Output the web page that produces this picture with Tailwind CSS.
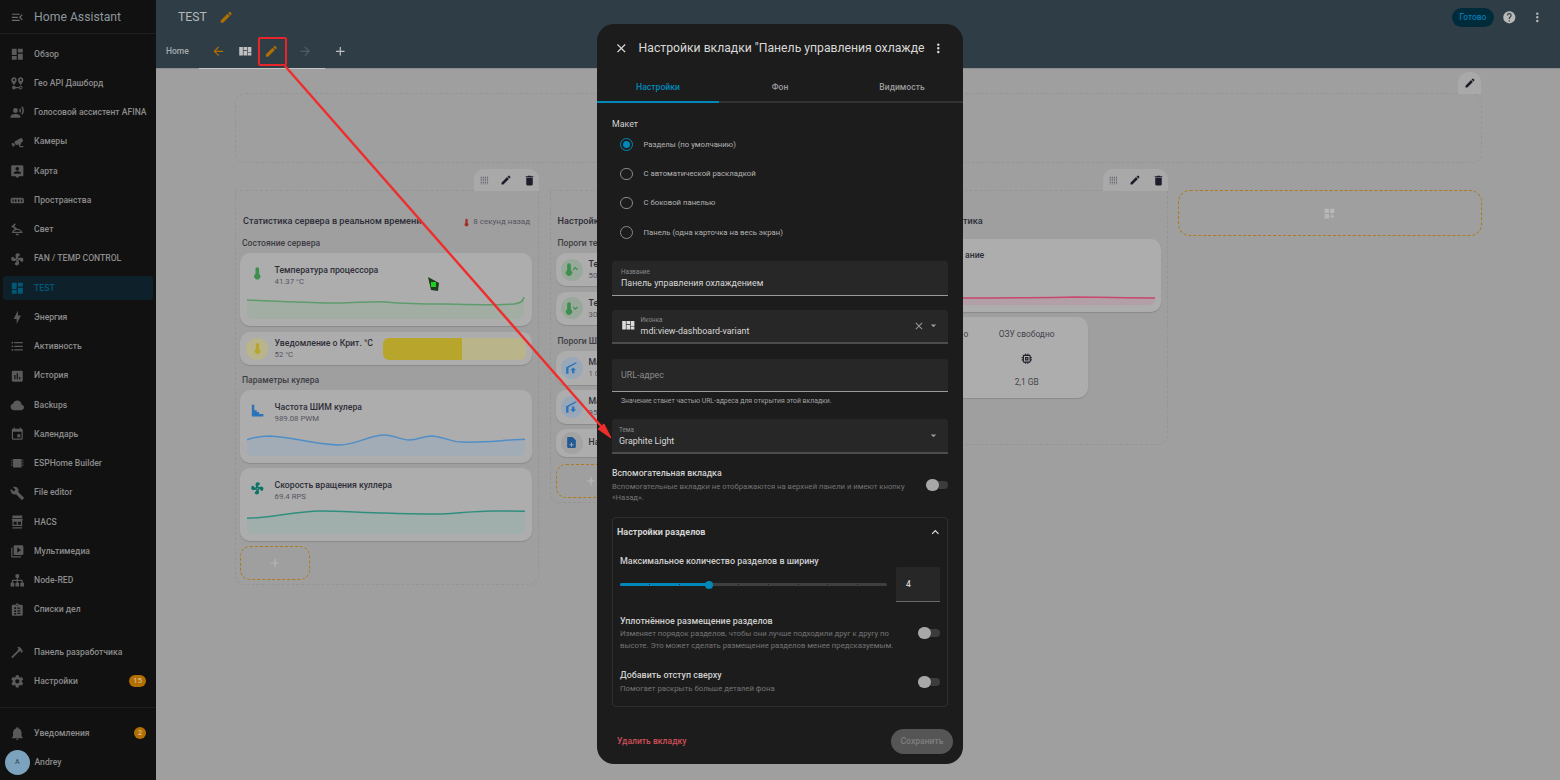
<!DOCTYPE html>
<html lang="en">
<head>
    <meta charset="UTF-8">
    <meta name="viewport" content="width=device-width, initial-scale=1.0">
    <title>Home Assistant</title>
    <script src="https://cdn.jsdelivr.net/npm/@tailwindcss/browser@4"></script>
</head>
<body class="relative h-[780px] w-[1560px] overflow-hidden bg-[#9f9f9f] font-['Roboto',sans-serif]">
    <svg class="hidden">
        <symbol id="pencil" viewBox="0 0 24 24"><path d="M20.71,7.04C21.1,6.65 21.1,6 20.71,5.63L18.37,3.29C18,2.9 17.35,2.9 16.96,3.29L15.12,5.12L18.87,8.87M3,17.25V21H6.75L17.81,9.93L14.06,6.18L3,17.25Z"/></symbol>
        <symbol id="quilt" viewBox="0 0 24 24"><path d="M2,5V19H8V5H2M9,5V10H15V5H9M16,5V14H22V5H16M9,11V19H15V11H9M16,15V19H22V15H16Z"/></symbol>
        <symbol id="dash" viewBox="0 0 24 24"><path d="M13,3V9H21V3M13,21H21V11H13M3,21H11V15H3M3,13H11V3H3V13Z"/></symbol>
        <symbol id="dots" viewBox="0 0 24 24"><path d="M12,16A2,2 0 0,1 14,18A2,2 0 0,1 12,20A2,2 0 0,1 10,18A2,2 0 0,1 12,16M12,10A2,2 0 0,1 14,12A2,2 0 0,1 12,14A2,2 0 0,1 10,12A2,2 0 0,1 12,10M12,4A2,2 0 0,1 14,6A2,2 0 0,1 12,8A2,2 0 0,1 10,6A2,2 0 0,1 12,4Z"/></symbol>
        <symbol id="trash" viewBox="0 0 24 24"><path d="M19,4H15.5L14.5,3H9.5L8.5,4H5V6H19M6,19A2,2 0 0,0 8,21H16A2,2 0 0,0 18,19V7H6V19Z"/></symbol>
        <symbol id="plus" viewBox="0 0 24 24"><path d="M19,13H13V19H11V13H5V11H11V5H13V11H19V13Z"/></symbol>
        <symbol id="close" viewBox="0 0 24 24"><path d="M19,6.41L17.59,5L12,10.59L6.41,5L5,6.41L10.59,12L5,17.59L6.41,19L12,13.41L17.59,19L19,17.59L13.41,12L19,6.41Z"/></symbol>
        <symbol id="menu-down" viewBox="0 0 24 24"><path d="M7,10L12,15L17,10H7Z"/></symbol>
        <symbol id="thermo" viewBox="0 0 24 24"><path d="M15 13V5A3 3 0 0 0 9 5V13A5 5 0 1 0 15 13Z"/></symbol>
        <symbol id="thermo-up" viewBox="0 0 24 24"><path d="M11 13V5A3 3 0 0 0 5 5V13A5 5 0 1 0 11 13Z"/><path d="M14.500 12.500L18 9L21.500 12.500" fill="none" stroke="currentColor" stroke-width="2"/></symbol>
        <symbol id="thermo-down" viewBox="0 0 24 24"><path d="M11 13V5A3 3 0 0 0 5 5V13A5 5 0 1 0 11 13Z"/><path d="M14.500 9.500L18 13L21.500 9.500" fill="none" stroke="currentColor" stroke-width="2"/></symbol>
        <symbol id="fan" viewBox="0 0 24 24"><path d="M12,11A1,1 0 0,0 11,12A1,1 0 0,0 12,13A1,1 0 0,0 13,12A1,1 0 0,0 12,11M12.5,2C17,2 17.11,5.57 14.75,6.75C13.76,7.24 13.32,8.29 13.13,9.22C13.61,9.42 14.03,9.73 14.35,10.13C18.05,8.13 22.03,8.92 22.03,12.5C22.03,17 18.46,17.1 17.28,14.73C16.78,13.74 15.72,13.3 14.79,13.11C14.59,13.59 14.28,14 13.88,14.34C15.87,18.03 15.08,22 11.5,22C7,22 6.91,18.42 9.27,17.24C10.25,16.75 10.69,15.71 10.89,14.79C10.4,14.59 9.97,14.27 9.65,13.87C5.96,15.85 2,15.07 2,11.5C2,7 5.56,6.89 6.74,9.26C7.24,10.25 8.29,10.68 9.22,10.87C9.41,10.39 9.73,9.97 10.14,9.65C8.15,5.96 8.94,2 12.5,2Z"/></symbol>
        <symbol id="gate-up" viewBox="0 0 24 24"><path d="M2 10H6V22H2ZM5 9L19 2L20 4L6 11.500Z"/><path d="M9 16L14 11L19 16H16V21H12V16Z"/></symbol>
        <symbol id="gate-down" viewBox="0 0 24 24"><path d="M2 10H6V22H2ZM5 9L19 2L20 4L6 11.500Z"/><path d="M12 11H16V16H19L14 21L9 16H12Z"/></symbol>
        <symbol id="drag" viewBox="0 0 24 24"><path d="M5 4V20M9.5 4V20M14 4V20M18.500 4V20" fill="none" stroke="currentColor" stroke-width="2.500" stroke-dasharray="2.500 1.200"/></symbol>
    </svg>

    <div class="flex h-full">
        <!-- sidebar -->
        <aside class="flex w-[156px] shrink-0 flex-col bg-[#111111] text-[8.6px] font-medium text-[#8c8c8c]">
            <div class="flex h-[34px] items-center gap-[9.500px] border-b border-[#1e1e1e] pl-[10px] pt-[1px]">
                <svg class="size-[14.600px] fill-[#6b6b6b]" viewBox="0 0 24 24"><path d="M21,15.610L19.590,17L14.580,12L19.590,7L21,8.390L17.440,12L21,15.610M3,6H16V8H3V6M3,13V11H13V13H3M3,18V16H16V18H3Z"/></svg>
                <span class="text-[12.200px] font-normal text-[#8d979c]">Home Assistant</span>
            </div>
            <nav class="mt-[5.500px] [&>div]:flex [&>div]:h-[29.260px] [&>div]:items-center [&>div]:gap-[9.500px] [&>div]:pl-[10px] [&_svg]:size-[14.600px] [&_svg]:shrink-0 [&_svg]:fill-[#5a5a5a]">
                <div><svg viewBox="0 0 24 24"><use href="#dash"/></svg>Обзор</div>
                <div><svg viewBox="0 0 24 24"><path d="M6.5,8.110C5.610,8.110 4.890,7.390 4.890,6.500A1.610,1.610 0 0,1 6.500,4.890C7.390,4.890 8.110,5.610 8.110,6.500V6.500A1.610,1.610 0 0,1 6.500,8.110M6.500,2C4,2 2,4 2,6.500C2,9.870 6.500,14.860 6.500,14.860C6.500,14.860 11,9.870 11,6.500C11,4 9,2 6.500,2M17.500,8.110A1.610,1.610 0 0,1 15.890,6.500C15.890,5.610 16.610,4.890 17.500,4.890C18.390,4.890 19.110,5.610 19.110,6.500A1.610,1.610 0 0,1 17.500,8.110M17.500,2C15,2 13,4 13,6.500C13,9.870 17.500,14.860 17.500,14.860C17.500,14.860 22,9.870 22,6.500C22,4 20,2 17.500,2M17.500,16C16.230,16 15.100,16.800 14.680,18H9.320C8.770,16.440 7.050,15.620 5.500,16.170C3.930,16.720 3.110,18.440 3.660,20C4.220,21.560 5.930,22.380 7.500,21.830C8.350,21.530 9,20.850 9.320,20H14.690C15.240,21.560 16.960,22.380 18.500,21.830C20.080,21.280 20.900,19.560 20.350,18C19.920,16.800 18.780,16 17.500,16M17.500,20.500A1.500,1.500 0 0,1 16,19A1.500,1.500 0 0,1 17.500,17.500A1.500,1.500 0 0,1 19,19A1.500,1.500 0 0,1 17.500,20.500Z"/></svg>Гео API Дашборд</div>
                <div><svg viewBox="0 0 24 24"><path d="M9,5A4,4 0 0,1 13,9A4,4 0 0,1 9,13A4,4 0 0,1 5,9A4,4 0 0,1 9,5M9,15C11.670,15 17,16.340 17,19V21H1V19C1,16.340 6.330,15 9,15M16.760,5.360C18.780,7.560 18.780,10.610 16.760,12.630L15.080,10.940C15.920,9.760 15.920,8.230 15.080,7.050L16.760,5.360M20.070,2C24,6.050 23.970,12.110 20.070,16L18.440,14.370C21.210,11.190 21.210,6.650 18.440,3.630L20.070,2Z"/></svg>Голосовой ассистент AFINA</div>
                <div><svg viewBox="0 0 24 24"><path d="M18.150,4.940C17.770,4.910 17.370,5 17,5.200L8.350,10.200C7.390,10.760 7.060,12 7.620,12.940L9.120,15.530C9.670,16.500 10.890,16.820 11.850,16.270L13.650,15.230C13.920,15.690 14.320,16.060 14.810,16.270V18.040C14.810,19.130 15.700,20 16.810,20H22V18.040H16.810V16.270C17.720,15.870 18.310,14.970 18.310,14C18.310,13.540 18.190,13.110 17.970,12.730L20.560,11.230C21.530,10.670 21.860,9.440 21.300,8.500L19.800,5.900C19.430,5.250 18.800,4.940 18.150,4.940M6.220,13.170L2,13.870L2.750,15.170L4.750,18.630L5.500,19.930L8.220,16.630L6.220,13.170Z"/></svg>Камеры</div>
                <div><svg viewBox="0 0 24 24"><path fill-rule="evenodd" d="M4 2H20A2 2 0 0 1 22 4V18A2 2 0 0 1 20 20H15L12 23L9 20H4A2 2 0 0 1 2 18V4A2 2 0 0 1 4 2ZM12 5A3 3 0 1 0 12 11A3 3 0 1 0 12 5ZM6 16H18V15C18 13 14 12 12 12C10 12 6 13 6 15Z"/></svg>Карта</div>
                <div><svg viewBox="0 0 24 24"><path fill-rule="evenodd" d="M4 8H20A3 3 0 0 1 23 11V15A2 2 0 0 1 21 17H3A2 2 0 0 1 1 15V11A3 3 0 0 1 4 8ZM4 10.500V14.500H6V10.500ZM8 10.500V14.500H10.500V10.500ZM13 10.500V14.500H15.500V10.500ZM18 10.500V14.500H20V10.500Z"/></svg>Пространства</div>
                <div><svg viewBox="0 0 24 24"><path d="M2 8L8 2L9.500 3.500L7 7L12 11C16 11 20 14 21 18H3C3.500 15 5 13 8 12L5 8.500L3.500 9.500ZM5.500 16H18C17 14 14.500 13 12 13C9.500 13 7 14 5.500 16ZM9 19.500H15C15 21 13.500 22 12 22C10.500 22 9 21 9 19.500Z"/></svg>Свет</div>
                <div><svg viewBox="0 0 24 24"><use href="#fan"/></svg>FAN / TEMP CONTROL</div>
                <div class="relative text-[#01597a] [&_svg]:!fill-[#01597a]"><span class="absolute inset-x-[3px] inset-y-[2.600px] -z-0 rounded-[3px] bg-[#0e2029]"></span><svg class="relative" viewBox="0 0 24 24"><use href="#dash"/></svg><span class="relative">TEST</span></div>
                <div><svg viewBox="0 0 24 24"><path d="M11 15H6L13 1V9H18L11 23V15Z"/></svg>Энергия</div>
                <div><svg viewBox="0 0 24 24"><path d="M7,5H21V7H7V5M7,13V11H21V13H7M4,4.500A1.500,1.500 0 0,1 5.500,6A1.500,1.500 0 0,1 4,7.500A1.500,1.500 0 0,1 2.500,6A1.500,1.500 0 0,1 4,4.500M4,10.500A1.500,1.500 0 0,1 5.500,12A1.500,1.500 0 0,1 4,13.500A1.500,1.500 0 0,1 2.500,12A1.500,1.500 0 0,1 4,10.500M7,19V17H21V19H7M4,16.500A1.500,1.500 0 0,1 5.500,18A1.500,1.500 0 0,1 4,19.500A1.500,1.500 0 0,1 2.500,18A1.500,1.500 0 0,1 4,16.500Z"/></svg>Активность</div>
                <div><svg viewBox="0 0 24 24"><path d="M19 3H5C3.900 3 3 3.900 3 5V19C3 20.100 3.900 21 5 21H19C20.100 21 21 20.100 21 19V5C21 3.900 20.100 3 19 3M9 17H7V10H9V17M13 17H11V7H13V17M17 17H15V13H17V17Z"/></svg>История</div>
                <div><svg viewBox="0 0 24 24"><path d="M6.500 20Q4.220 20 2.610 18.430 1 16.850 1 14.580 1 12.630 2.170 11.100 3.350 9.570 5.250 9.150 5.880 6.850 7.750 5.430 9.630 4 12 4 14.930 4 16.960 6.040 19 8.070 19 11 20.730 11.200 21.860 12.500 23 13.780 23 15.500 23 17.380 21.690 18.690 20.380 20 18.500 20Z"/></svg>Backups</div>
                <div><svg viewBox="0 0 24 24"><path d="M19,19H5V8H19M16,1V3H8V1H6V3H5C3.890,3 3,3.890 3,5V19A2,2 0 0,0 5,21H19A2,2 0 0,0 21,19V5C21,3.890 20.100,3 19,3H18V1M17,12H12V17H17V12Z"/></svg>Календарь</div>
                <div><svg viewBox="0 0 24 24"><path d="M5 5H19V19H5ZM2 6H4V8H2ZM2 10H4V12H2ZM2 14H4V16H2ZM20 6H22V8H20ZM20 10H22V12H20ZM20 14H22V16H20Z"/></svg>ESPHome Builder</div>
                <div><svg viewBox="0 0 24 24"><path d="M22.700,19L13.600,9.900C14.500,7.600 14,4.900 12.100,3C10.100,1 7.100,0.600 4.700,1.700L9,6L6,9L1.600,4.700C0.400,7.100 0.900,10.100 2.900,12.100C4.800,14 7.500,14.500 9.800,13.600L18.900,22.700C19.300,23.100 19.900,23.100 20.300,22.700L22.600,20.400C23.100,20 23.100,19.300 22.700,19Z"/></svg>File editor</div>
                <div><svg viewBox="0 0 24 24"><path fill-rule="evenodd" d="M4 1H20V5H4ZM3 6H21V8L20 10V18H4V10L3 8ZM6 11V16H11V11ZM13 11V16H18V11ZM4 20H20V22H4Z"/></svg>HACS</div>
                <div><svg viewBox="0 0 24 24"><path d="M4 6H2V20A2 2 0 0 0 4 22H18V20H4V6M20 2H8A2 2 0 0 0 6 4V16A2 2 0 0 0 8 18H20A2 2 0 0 0 22 16V4A2 2 0 0 0 20 2M12 14.500V5.500L18 10L12 14.500Z"/></svg>Мультимедиа</div>
                <div><svg viewBox="0 0 24 24"><path d="M9,2V8H11V11H5C3.890,11 3,11.890 3,13V16H1V22H7V16H5V13H11V16H9V22H15V16H13V13H19V16H17V22H23V16H21V13C21,11.890 20.110,11 19,11H13V8H15V2H9Z"/></svg>Node-RED</div>
                <div><svg viewBox="0 0 24 24"><path d="M19,3H14.820C14.400,1.840 13.300,1 12,1C10.700,1 9.600,1.840 9.180,3H5A2,2 0 0,0 3,5V19A2,2 0 0,0 5,21H19A2,2 0 0,0 21,19V5A2,2 0 0,0 19,3M7,7H10V10H7V7M7,12H10V15H7V12M7,16.500H10V19H7V16.500M17,18H12V16H17V18M17,14H12V12H17V14M17,9.500H12V7.500H17V9.500M12,3A1,1 0 0,1 13,4A1,1 0 0,1 12,5A1,1 0 0,1 11,4A1,1 0 0,1 12,3Z"/></svg>Списки дел</div>

                <div class="mt-[13px]"><svg viewBox="0 0 24 24"><path d="M2 19.630L13.430 8.200L12.720 7.500L14.140 6.070L12 3.890C13.200 2.700 15.090 2.700 16.270 3.890L19.870 7.500L18.450 8.910H21.290L22 9.620L18.450 13.210L17.740 12.500V9.620L16.270 11.040L15.560 10.330L4.130 21.760L2 19.630Z"/></svg>Панель разработчика</div>
                <div class="relative"><svg viewBox="0 0 24 24"><path d="M12,15.500A3.500,3.500 0 0,1 8.500,12A3.500,3.500 0 0,1 12,8.500A3.500,3.500 0 0,1 15.500,12A3.500,3.500 0 0,1 12,15.500M19.430,12.970C19.470,12.650 19.500,12.330 19.500,12C19.500,11.670 19.470,11.340 19.430,11L21.540,9.370C21.730,9.220 21.780,8.950 21.660,8.730L19.660,5.270C19.540,5.050 19.270,4.960 19.050,5.050L16.560,6.050C16.040,5.660 15.500,5.320 14.870,5.070L14.500,2.420C14.460,2.180 14.250,2 14,2H10C9.750,2 9.540,2.180 9.500,2.420L9.130,5.070C8.500,5.320 7.960,5.660 7.440,6.050L4.950,5.050C4.730,4.960 4.460,5.050 4.340,5.270L2.340,8.730C2.210,8.950 2.270,9.220 2.460,9.370L4.570,11C4.530,11.340 4.500,11.670 4.500,12C4.500,12.330 4.530,12.650 4.570,12.970L2.460,14.630C2.270,14.780 2.210,15.050 2.340,15.270L4.340,18.730C4.460,18.950 4.730,19.030 4.950,18.950L7.440,17.940C7.960,18.340 8.500,18.680 9.130,18.930L9.500,21.580C9.540,21.820 9.750,22 10,22H14C14.250,22 14.460,21.820 14.500,21.580L14.870,18.930C15.500,18.670 16.040,18.340 16.560,17.940L19.050,18.950C19.270,19.030 19.540,18.950 19.660,18.730L21.660,15.270C21.780,15.050 21.730,14.780 21.540,14.630L19.430,12.970Z"/></svg>Настройки<span class="absolute right-[10px] flex h-[12px] w-[17px] items-center justify-center rounded-full bg-[#b26f00] text-[8px] text-[#d8b98a]">15</span></div>
            </nav>
            <div class="mt-[10.500px] border-t border-[#1e1e1e]"></div>
            <div class="relative mt-[11px] flex h-[29.260px] items-center gap-[9.500px] pl-[10px]"><svg class="size-[14.600px] fill-[#5a5a5a]" viewBox="0 0 24 24"><path d="M21,19V20H3V19L5,17V11C5,7.900 7.030,5.170 10,4.290C10,4.190 10,4.100 10,4A2,2 0 0,1 12,2A2,2 0 0,1 14,4C14,4.100 14,4.190 14,4.290C16.970,5.170 19,7.900 19,11V17L21,19M14,21A2,2 0 0,1 12,23A2,2 0 0,1 10,21"/></svg>Уведомления<span class="absolute right-[10px] flex size-[12px] items-center justify-center rounded-full bg-[#b26f00] text-[8px] text-[#d8b98a]">2</span></div>
            <div class="flex h-[29.260px] items-center gap-[5px] pl-[5px]"><span class="flex size-[24.500px] items-center justify-center rounded-full bg-[#7ba3bd] text-[7px] text-[#3d5160]">A</span>Andrey</div>
        </aside>

        <main class="min-w-0 flex-1">
            <!-- top bar -->
            <header class="flex h-[69px] flex-col border-b border-[#8e8e8e] bg-[#2f3e46]">
                <div class="flex h-[34px] items-center pl-[22px] pr-[15px]">
                    <span class="text-[12.200px] text-[#b5b9bb]">TEST</span>
                    <svg class="ml-[12px] size-[14.600px] fill-[#b06f00]"><use href="#pencil"/></svg>
                    <span class="ml-auto flex h-[19px] w-[42px] items-center justify-center rounded-full bg-[#002b3b] text-[8.500px] font-medium text-[#0279ad]">Готово</span>
                    <svg class="ml-[8px] size-[14.600px] fill-[#b8b8b8]" viewBox="0 0 24 24"><path d="M15.070,11.250L14.170,12.170C13.450,12.890 13,13.500 13,15H11V14.500C11,13.390 11.450,12.390 12.170,11.670L13.410,10.410C13.780,10.050 14,9.550 14,9C14,7.890 13.100,7 12,7A2,2 0 0,0 10,9H8A4,4 0 0,1 12,5A4,4 0 0,1 16,9C16,9.880 15.640,10.670 15.070,11.250M13,19H11V17H13M12,2A10,10 0 0,0 2,12A10,10 0 0,0 12,22A10,10 0 0,0 22,12C22,6.470 17.500,2 12,2Z"/></svg>
                    <svg class="ml-[14px] size-[14.600px] fill-[#b8b8b8]"><use href="#dots"/></svg>
                </div>
                <div class="flex flex-1 items-center pl-[10px]">
                    <span class="w-[33px] text-[8.500px] font-medium text-[#a5abae]">Home</span>
                    <div class="-mb-[1px] flex h-full w-[126px] items-center border-b border-[#c4c4c4] pl-[12px]">
                        <svg class="size-[14.600px] fill-[#b06f00]" viewBox="0 0 24 24"><path d="M20,11V13H8L13.500,18.500L12.080,19.920L4.160,12L12.080,4.080L13.500,5.500L8,11H20Z"/></svg>
                        <svg class="ml-[12px] size-[14.600px] fill-[#c0c0c0]"><use href="#quilt"/></svg>
                        <svg class="ml-[11.500px] size-[14.600px] fill-[#b06f00]"><use href="#pencil"/></svg>
                        <svg class="ml-[20px] size-[14.600px] fill-[#4f5c63]" viewBox="0 0 24 24"><path d="M4,11V13H16L10.500,18.500L11.920,19.920L19.840,12L11.920,4.080L10.500,5.500L16,11H4Z"/></svg>
                    </div>
                    <svg class="ml-[7.500px] size-[14.600px] fill-[#c0c0c0]"><use href="#plus"/></svg>
                </div>
            </header>

            <div class="relative pl-[79px] pr-[78px] pt-[24px] text-[#2d2d38]">
                <!-- top strip -->
                <div class="relative h-[70px] rounded-[10px] border border-dashed border-[#959595]">
                    <span class="absolute -top-[22px] right-0 flex h-[22px] w-[23px] items-center justify-center rounded-t-[10px] bg-[#a9a9a9]"><svg class="size-[12px] fill-[#1d1d2b]"><use href="#pencil"/></svg></span>
                </div>

                <div class="mt-[27px] grid grid-cols-4 items-start gap-[11px]">
                    <!-- section 1 -->
                    <section class="relative h-[395px] rounded-b-[10px] border border-dashed border-[#959595] pl-[4px] pr-[5.500px]">
                        <div class="absolute -right-[1px] -top-[22px] flex h-[22px] w-[65px] items-center gap-[10.500px] rounded-t-[10px] bg-[#a9a9a9] pl-[5px] text-[#666672]">
                            <svg class="size-[11px]"><use href="#drag"/></svg><svg class="size-[12px] fill-[#1d1d2b]"><use href="#pencil"/></svg><svg class="size-[13px] fill-[#1d1d2b]"><use href="#trash"/></svg>
                        </div>
                        <div class="mt-[23px] flex h-[16px] items-center justify-between pl-[3px] pr-[2px] text-[9.150px] font-medium">
                            <span>Статистика сервера в реальном времени</span>
                            <span class="flex items-center text-[8px] font-normal text-[#55555e]"><svg class="size-[9px] fill-[#a52b2b]"><use href="#thermo"/></svg>&nbsp;8 секунд назад</span>
                        </div>
                        <h3 class="mt-[6px] h-[14px] pl-[2px] text-[8.600px] font-medium leading-[14px] text-[#3d3d44]">Состояние сервера</h3>

                        <div class="relative mt-[3px] h-[73px] rounded-[10px] bg-[#adadad] shadow-[0_1px_1px_#8a8a8a]">
                            <svg class="absolute left-[10px] top-[13px] size-[14.600px] fill-[#3e8e4e]"><use href="#thermo"/></svg>
                            <p class="pl-[34.500px] pt-[10.500px] text-[8.700px] font-medium leading-[12px]">Температура процессора</p>
                            <p class="pl-[34.500px] text-[7.800px] leading-[12px] text-[#55555e]">41.37 °C</p>
                            <svg class="absolute bottom-[7px] left-[7px] h-[23px] w-[278px] overflow-hidden rounded-b-[6px]" viewBox="0 0 279 23" preserveAspectRatio="none"><path d="M0 4C30 5 60 7 90 7C110 7 125 5 140 6C160 8 180 8 200 8C225 9 250 9 268 8C274 7 277 6 278 1V23H0Z" fill="#a2aea4"/><path d="M0 4C30 5 60 7 90 7C110 7 125 5 140 6C160 8 180 8 200 8C225 9 250 9 268 8C274 7 277 6 278 1" fill="none" stroke="#5e9c6c" stroke-width="1.500"/></svg>
                        </div>

                        <div class="relative mt-[6px] flex h-[33px] items-center rounded-[10px] bg-[#adadad] shadow-[0_1px_1px_#8a8a8a]">
                            <span class="ml-[6px] flex size-[22px] items-center justify-center rounded-full bg-[#b9b48a]"><svg class="size-[13px] fill-[#b7a52c]"><use href="#thermo"/></svg></span>
                            <div class="ml-[6.500px] flex-1">
                                <p class="text-[8.700px] font-medium leading-[12px]">Уведомление о Крит. °C</p>
                                <p class="text-[7.800px] leading-[11px] text-[#55555e]">52 °C</p>
                            </div>
                            <div class="mr-[6px] flex h-[22px] w-[143px] overflow-hidden rounded-[6px] bg-[#b9b48a]"><div class="h-full w-[79px] bg-[#b7a52c]"></div></div>
                        </div>

                        <h3 class="mt-[8px] h-[14px] pl-[2px] text-[8.600px] font-medium leading-[14px] text-[#3d3d44]">Параметры кулера</h3>

                        <div class="relative mt-[3px] h-[73px] rounded-[10px] bg-[#adadad] shadow-[0_1px_1px_#8a8a8a]">
                            <svg class="absolute left-[10px] top-[13px] size-[14.600px] fill-[#2c73b8]" viewBox="0 0 24 24"><path d="M3 3H7V12H11V15H15V18H22V22H3Z"/></svg>
                            <p class="pl-[34.500px] pt-[10.500px] text-[8.700px] font-medium leading-[12px]">Частота ШИМ кулера</p>
                            <p class="pl-[34.500px] text-[7.800px] leading-[12px] text-[#55555e]">989.08 PWM</p>
                            <svg class="absolute bottom-[7px] left-[7px] h-[22px] w-[278px] overflow-hidden rounded-b-[6px]" viewBox="0 0 279 22" preserveAspectRatio="none"><path d="M0 5.700C8 3 15 2 23 2C45 3 70 11 93 11C110 11 122 1 138 1C148 1 154 6 163 6C172 6 176 2 186 2C198 3 205 8 216 8C235 9 258 6 279 5.300V22H0Z" fill="#a1acb7"/><path d="M0 5.700C8 3 15 2 23 2C45 3 70 11 93 11C110 11 122 1 138 1C148 1 154 6 163 6C172 6 176 2 186 2C198 3 205 8 216 8C235 9 258 6 279 5.300" fill="none" stroke="#4f8ec7" stroke-width="1.500"/></svg>
                        </div>

                        <div class="relative mt-[5px] h-[73px] rounded-[10px] bg-[#adadad] shadow-[0_1px_1px_#8a8a8a]">
                            <svg class="absolute left-[10px] top-[13px] size-[14.600px] fill-[#0c7467]"><use href="#fan"/></svg>
                            <p class="pl-[34.500px] pt-[10.500px] text-[8.700px] font-medium leading-[12px]">Скорость вращения куллера</p>
                            <p class="pl-[34.500px] text-[7.800px] leading-[12px] text-[#55555e]">69.4 RPS</p>
                            <svg class="absolute bottom-[7px] left-[7px] h-[26px] w-[278px] overflow-hidden rounded-b-[6px]" viewBox="0 0 279 26" preserveAspectRatio="none"><path d="M0 10.300C25 10 50 3 73 3C95 3 120 5 139 5C160 6 180 6 196 6C215 5 230 3 246 3C258 3 270 3 279 3.300V26H0Z" fill="#a0afab"/><path d="M0 10.300C25 10 50 3 73 3C95 3 120 5 139 5C160 6 180 6 196 6C215 5 230 3 246 3C258 3 270 3 279 3.300" fill="none" stroke="#2f8f7f" stroke-width="1.500"/></svg>
                        </div>

                        <div class="mt-[5px] flex h-[34px] w-[70px] items-center justify-center rounded-[10px] border-[1.500px] border-dashed border-[#b07a1c]"><svg class="size-[14px] fill-[#b8b8b8]"><use href="#plus"/></svg></div>
                    </section>

                    <!-- section 2, mostly under the dialog -->
                    <section class="h-[313px] rounded-b-[10px] border border-dashed border-[#959595] px-[5px]">
                        <div class="mt-[23px] flex h-[16px] items-center pl-[2px] text-[9.150px] font-medium">Настройк</div>
                        <h3 class="mt-[6px] h-[14px] pl-[2px] text-[8.600px] font-medium leading-[14px] text-[#3d3d44]">Пороги те</h3>
                        <div class="mt-[3px] flex h-[33px] items-center rounded-[10px] bg-[#adadad] pl-[5px] shadow-[0_1px_1px_#8a8a8a]">
                            <span class="flex size-[22px] items-center justify-center rounded-full bg-[#98a99b] text-[#3e8e4e]"><svg class="size-[15px] fill-[#3e8e4e]"><use href="#thermo-up"/></svg></span>
                            <div class="ml-[6px]"><p class="text-[8.700px] font-medium leading-[12px]">Те</p><p class="text-[7.800px] leading-[11px] text-[#55555e]">50</p></div>
                        </div>
                        <div class="mt-[5.500px] flex h-[33px] items-center rounded-[10px] bg-[#adadad] pl-[5px] shadow-[0_1px_1px_#8a8a8a]">
                            <span class="flex size-[22px] items-center justify-center rounded-full bg-[#98a99b] text-[#3e8e4e]"><svg class="size-[15px] fill-[#3e8e4e]"><use href="#thermo-down"/></svg></span>
                            <div class="ml-[6px]"><p class="text-[8.700px] font-medium leading-[12px]">Те</p><p class="text-[7.800px] leading-[11px] text-[#55555e]">30</p></div>
                        </div>
                        <h3 class="mt-[9px] h-[14px] pl-[2px] text-[8.600px] font-medium leading-[14px] text-[#3d3d44]">Пороги Ш</h3>
                        <div class="mt-[3px] flex h-[34px] items-center rounded-[10px] bg-[#adadad] pl-[5px] shadow-[0_1px_1px_#8a8a8a]">
                            <span class="flex size-[22px] items-center justify-center rounded-full bg-[#98a8b8]"><svg class="size-[14px] fill-[#2c73b8]"><use href="#gate-up"/></svg></span>
                            <div class="ml-[6px]"><p class="text-[8.700px] font-medium leading-[12px]">Ма</p><p class="text-[7.800px] leading-[11px] text-[#55555e]">1 0</p></div>
                        </div>
                        <div class="mt-[5px] flex h-[34px] items-center rounded-[10px] bg-[#adadad] pl-[5px] shadow-[0_1px_1px_#8a8a8a]">
                            <span class="flex size-[22px] items-center justify-center rounded-full bg-[#98a8b8]"><svg class="size-[14px] fill-[#2c73b8]"><use href="#gate-down"/></svg></span>
                            <div class="ml-[6px]"><p class="text-[8.700px] font-medium leading-[12px]">Ма</p><p class="text-[7.800px] leading-[11px] text-[#55555e]">95</p></div>
                        </div>
                        <div class="mt-[5px] flex h-[28px] items-center rounded-[10px] bg-[#adadad] pl-[5px] shadow-[0_1px_1px_#8a8a8a]">
                            <span class="flex size-[22px] items-center justify-center rounded-full bg-[#a3a3a3]"><svg class="size-[13px] fill-[#1f5a96]" viewBox="0 0 24 24"><path d="M6 2H14L20 8V20C20 21.100 19.100 22 18 22H6C4.900 22 4 21.100 4 20V4C4 2.900 4.900 2 6 2ZM11 12V15H8V17H11V20H13V17H16V15H13V12Z" fill-rule="evenodd"/></svg></span>
                            <p class="ml-[6px] text-[8.700px] font-medium">На</p>
                        </div>
                        <div class="mt-[7px] flex h-[34px] w-[70px] items-center justify-center rounded-[10px] border-[1.500px] border-dashed border-[#b07a1c]"><svg class="size-[14px] fill-[#b8b8b8]"><use href="#plus"/></svg></div>
                    </section>

                    <!-- section 3 -->
                    <section class="relative h-[255px] rounded-b-[10px] border border-dashed border-[#959595] px-[5px]">
                        <div class="absolute -right-[1px] -top-[22px] flex h-[22px] w-[65px] items-center gap-[10.500px] rounded-t-[10px] bg-[#a9a9a9] pl-[5px] text-[#666672]">
                            <svg class="size-[11px]"><use href="#drag"/></svg><svg class="size-[12px] fill-[#1d1d2b]"><use href="#pencil"/></svg><svg class="size-[13px] fill-[#1d1d2b]"><use href="#trash"/></svg>
                        </div>
                        <div class="mt-[23px] flex h-[16px] items-center pl-[93px] text-[9.150px] font-medium">тика</div>
                        <div class="relative mt-[9px] h-[73px] w-[291px] rounded-[10px] bg-[#adadad] shadow-[0_1px_1px_#8a8a8a]">
                            <p class="pl-[95px] pt-[10px] text-[8.700px] font-medium leading-[12px]">ание</p>
                            <svg class="absolute bottom-[7px] left-[7px] h-[10px] w-[278px] overflow-hidden rounded-b-[6px]" viewBox="0 0 278 10" preserveAspectRatio="none"><path d="M0 3C80 3 160 3 200 2C220 2 230 3 278 3V10H0Z" fill="#b29fa7"/><path d="M0 3C80 3 160 3 200 2C220 2 230 3 278 3" fill="none" stroke="#c9476f" stroke-width="1.500"/></svg>
                        </div>
                        <div class="mt-[5px] grid h-[81px] w-[218px] grid-cols-3 rounded-[10px] bg-[#adadad] pr-[30px] shadow-[0_1px_1px_#8a8a8a]">
                            <div></div>
                            <div class="pr-[27px] pt-[11px] text-right text-[8.400px] text-[#44444c]">о</div>
                            <div class="flex flex-col items-center whitespace-nowrap pt-[11px] text-[8.400px] text-[#44444c]">
                                ОЗУ свободно
                                <svg class="mt-[11px] size-[13.500px] shrink-0 fill-[#20202c]" viewBox="0 0 24 24"><path fill-rule="evenodd" d="M17,17H7V7H17ZM21,11V9H19V7C19,5.890 18.100,5 17,5H15V3H13V5H11V3H9V5H7C5.890,5 5,5.890 5,7V9H3V11H5V13H3V15H5V17A2,2 0 0,0 7,19H9V21H11V19H13V21H15V19H17A2,2 0 0,0 19,17V15H21V13H19V11ZM13,13H11V11H13ZM15,9H9V15H15Z"/></svg>
                                <span class="mt-[11px]">2,1 GB</span>
                            </div>
                        </div>
                    </section>

                    <!-- section 4 -->
                    <div class="-ml-[1px] flex h-[46px] items-center justify-center rounded-[12px] border-[1.500px] border-dashed border-[#b07a1c]">
                        <svg class="size-[13px] fill-[#b8b8b8]" viewBox="0 0 24 24"><path d="M3 11H11V3H3ZM13 11H21V3H13ZM3 21H11V13H3ZM16 13V16H13V18H16V21H18V18H21V16H18V13Z"/></svg>
                    </div>
                </div>
            </div>
        </main>
    </div>

    <!-- dialog -->
    <div class="absolute left-[597px] top-[24px] z-10 flex h-[740px] w-[366px] flex-col overflow-hidden rounded-[17px] bg-[#1c1c1c] text-[#d2d2d2]">
        <div class="flex h-[48px] items-center pl-[17px] pr-[17px]">
            <svg class="size-[14.600px] shrink-0 fill-[#dcdcdc]"><use href="#close"/></svg>
            <span class="ml-[10px] w-[286px] shrink-0 whitespace-nowrap text-[12.200px] text-[#d8d8d8]">Настройки вкладки "Панель управления охлажде</span>
            <svg class="ml-auto size-[14.600px] shrink-0 fill-[#dcdcdc]"><use href="#dots"/></svg>
        </div>
        <div class="mt-[2px] grid h-[29px] grid-cols-3 border-b-2 border-[#323232] text-[8.600px] font-medium text-[#9a9a9a]">
            <span class="-mb-[2px] flex items-center justify-center border-b-2 border-[#0288b8] pb-[1px] text-[#0288b8]">Настройки</span>
            <span class="flex items-center justify-center pb-[1px]">Фон</span>
            <span class="flex items-center justify-center pb-[1px]">Видимость</span>
        </div>

        <div class="px-[15px]">
            <p class="mt-[15px] text-[8.800px] leading-[12px]">Макет</p>
            <div class="text-[7.750px] text-[#b4b4b4] [&>div]:flex [&>div]:h-[29.300px] [&>div]:items-center [&>div]:gap-[11px] [&>div]:pl-[8px]">
                <div><span class="flex size-[12.500px] items-center justify-center rounded-full border-[1.500px] border-[#0288b8]"><span class="size-[6.500px] rounded-full bg-[#0288b8]"></span></span>Разделы (по умолчанию)</div>
                <div><span class="size-[12.500px] rounded-full border-[1.500px] border-[#8a8a8a]"></span>С автоматической раскладкой</div>
                <div><span class="size-[12.500px] rounded-full border-[1.500px] border-[#8a8a8a]"></span>С боковой панелью</div>
                <div><span class="size-[12.500px] rounded-full border-[1.500px] border-[#8a8a8a]"></span>Панель (одна карточка на весь экран)</div>
            </div>

            <div class="mt-[13.500px] flex h-[35px] flex-col justify-center rounded-t-[3px] border-b border-[#9a9a9a] bg-[#272727] pl-[9px] pt-[2px]">
                <span class="text-[6.300px] leading-[9px] text-[#8a8a8a]">Название</span>
                <span class="text-[8.900px] leading-[13px] text-[#d8d8d8]">Панель управления охлаждением</span>
            </div>
            <div class="mt-[14px] flex h-[34px] items-center rounded-t-[3px] border-b-2 border-[#4c4c4c] bg-[#272727] pl-[9px] pr-[8px]">
                <svg class="size-[14.600px] shrink-0 fill-[#dcdcdc]"><use href="#quilt"/></svg>
                <div class="ml-[5px] flex flex-col pt-[2px]">
                    <span class="text-[6.300px] leading-[9px] text-[#8a8a8a]">Иконка</span>
                    <span class="text-[8.900px] leading-[12px] text-[#d8d8d8]">mdi:view-dashboard-variant</span>
                </div>
                <svg class="ml-auto size-[12px] fill-[#9a9a9a]"><use href="#close"/></svg>
                <svg class="ml-[2px] size-[13px] fill-[#9a9a9a]"><use href="#menu-down"/></svg>
            </div>
            <div class="mt-[15px] flex h-[33.500px] items-center rounded-t-[3px] border-b border-[#9a9a9a] bg-[#272727] pl-[9px] pt-[2px] text-[8.900px] text-[#8a8a8a]">URL-адрес</div>
            <p class="mt-[4px] pl-[9px] text-[6.850px] leading-[10px] text-[#a2a2a2]">Значение станет частью URL-адреса для открытия этой вкладки.</p>
            <div class="mt-[13px] flex h-[35px] items-center rounded-t-[3px] border-b-2 border-[#4c4c4c] bg-[#272727] pl-[7px] pr-[8px]">
                <div class="flex flex-col pt-[2px]">
                    <span class="text-[6.300px] leading-[9px] text-[#8a8a8a]">Тема</span>
                    <span class="text-[8.900px] leading-[12px] text-[#d8d8d8]">Graphite Light</span>
                </div>
                <svg class="ml-auto size-[13px] fill-[#9a9a9a]"><use href="#menu-down"/></svg>
            </div>

            <div class="mt-[13px] flex items-center justify-between">
                <div class="w-[300px]">
                    <p class="text-[8.760px] font-medium leading-[12px] text-[#cfcfcf]">Вспомогательная вкладка</p>
                    <p class="mt-[3px] text-[7.700px] leading-[10.500px] text-[#747474]">Вспомогательные вкладки не отображаются на верхней панели и имеют кнопку «Назад».</p>
                </div>
                <span class="relative h-[8.500px] w-[22px] rounded-full bg-[#3c3c3c]"><span class="absolute -top-[2px] left-0 size-[12.500px] rounded-full bg-[#a8a8a8]"></span></span>
            </div>

            <div class="mt-[14px] h-[190px] rounded-[4px] border border-[#2e2e2e] px-[7px]">
                <div class="flex h-[29px] items-center justify-between text-[9px] font-bold text-[#d4d4d4]">
                    <span class="-ml-[3px]">Настройки разделов</span>
                    <svg class="-mr-[3px] size-[14.600px] fill-[#dcdcdc]" viewBox="0 0 24 24"><path d="M7.410,15.410L12,10.830L16.590,15.410L18,14L12,8L6,14L7.410,15.410Z"/></svg>
                </div>
                <p class="mt-[8px] text-[8.950px] font-medium leading-[12px] text-[#cfcfcf]">Максимальное количество разделов в ширину</p>
                <div class="flex items-center">
                    <div class="relative h-[2.500px] w-[267px] rounded-full bg-[#3f3f3f]">
                        <div class="h-full w-[89px] rounded-full bg-[#0288b8]"></div>
                        <div class="absolute inset-0 flex items-center justify-evenly">
                            <span class="size-[1px] bg-[#1c1c1c]"></span><span class="size-[1px] bg-[#1c1c1c]"></span><span class="size-[1px] bg-[#1c1c1c]"></span><span class="size-[1px] bg-[#1c1c1c]"></span><span class="size-[1px] bg-[#1c1c1c]"></span><span class="size-[1px] bg-[#1c1c1c]"></span><span class="size-[1px] bg-[#1c1c1c]"></span><span class="size-[1px] bg-[#1c1c1c]"></span>
                        </div>
                        <span class="absolute -top-[2.750px] left-[85px] size-[8px] rounded-full bg-[#0288b8]"></span>
                    </div>
                    <div class="ml-[9px] flex h-[35px] w-[44px] items-center rounded-t-[2px] border-b border-[#6a6a6a] bg-[#272727] pl-[10px] text-[8.500px] font-medium text-[#d2d2d2]">4</div>
                </div>
                <div class="mt-[13px] flex items-center justify-between">
                    <div class="w-[280px]">
                        <p class="text-[8.950px] font-medium leading-[12px] text-[#cfcfcf]">Уплотнённое размещение разделов</p>
                        <p class="mt-[1px] text-[7.780px] leading-[11.500px] text-[#747474]">Изменяет порядок разделов, чтобы они лучше подходили друг к другу по высоте. Это может сделать размещение разделов менее предсказуемым.</p>
                    </div>
                    <span class="relative h-[8.500px] w-[22px] rounded-full bg-[#3c3c3c]"><span class="absolute -top-[2px] left-0 size-[12.500px] rounded-full bg-[#a8a8a8]"></span></span>
                </div>
                <div class="mt-[18px] flex items-center justify-between">
                    <div>
                        <p class="text-[8.950px] font-medium leading-[12px] text-[#cfcfcf]">Добавить отступ сверху</p>
                        <p class="mt-[2px] text-[7.780px] leading-[11.500px] text-[#747474]">Помогает раскрыть больше деталей фона</p>
                    </div>
                    <span class="relative h-[8.500px] w-[22px] rounded-full bg-[#3c3c3c]"><span class="absolute -top-[2px] left-0 size-[12.500px] rounded-full bg-[#a8a8a8]"></span></span>
                </div>
            </div>
        </div>

        <div class="mt-[22px] flex items-center justify-between pl-[20px] pr-[10px]">
            <span class="text-[8.600px] font-medium text-[#d05058]">Удалить вкладку</span>
            <span class="flex h-[25px] w-[62px] items-center justify-center rounded-full bg-[#555555] text-[8.600px] font-medium text-[#7f7f7f]">Сохранить</span>
        </div>
    </div>

    <!-- annotation drawn over the screenshot -->
    <div class="absolute left-[258px] top-[37px] z-20 h-[29px] w-[29px] rounded-[2px] border-2 border-[#e8262a]"></div>
    <svg class="pointer-events-none absolute inset-0 z-20 h-[780px] w-[1560px]" viewBox="0 0 1560 780">
        <path d="M285 66L607 433" stroke="#ee2d2d" stroke-width="2.400" fill="none"/>
        <path d="M611 438L598 429L604 424Z" fill="#ee2d2d" stroke="#ee2d2d"/>
        <path d="M428 277L439 283L438 291L431 290Z" fill="#1d3d1d"/>
        <rect x="431" y="282" width="5" height="5" fill="#1fd01f"/>
    </svg>
</body>
</html>
